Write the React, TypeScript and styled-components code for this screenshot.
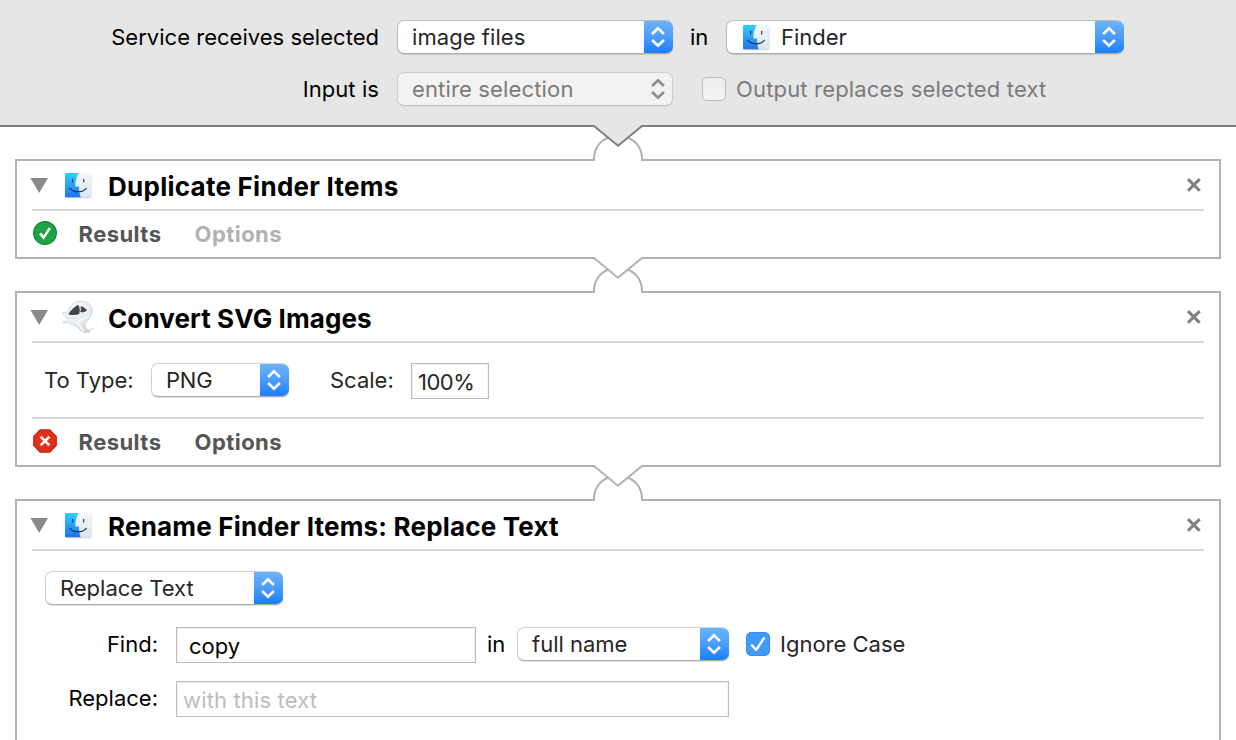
import React from "react";
import styled, { createGlobalStyle, css } from "styled-components";

const GlobalStyle = createGlobalStyle`
  *, *::before, *::after { box-sizing: border-box; }
  body { margin: 0; background: #fff; }
  svg { display: block; flex: none; }
`;

const Page = styled.div`
  display: flex;
  flex-direction: column;
  height: 740px;
  overflow: hidden;
  background: #fff;
  color: #000;
  font-family: Inter, "Liberation Sans", sans-serif;
  font-size: 22px;
  line-height: 28px;
`;

const ServiceBar = styled.header`
  flex: none;
  display: flex;
  flex-direction: column;
  gap: 18px;
  height: 127px;
  padding-top: 20px;
  background: #e6e6e6;
  border-bottom: 2px solid #7f7f7f;
`;

const ServiceRow = styled.div`
  display: flex;
  align-items: center;
  height: 34px;
`;

const Text = styled.span<{ $spacing?: number; $muted?: boolean; $soft?: boolean }>`
  flex: none;
  white-space: pre;
  letter-spacing: ${(p) => p.$spacing ?? 0}px;
  color: ${(p) => (p.$muted ? "#7b7b7b" : p.$soft ? "#262626" : "#000")};
`;

const ServiceLabel = styled(Text)`
  width: 379px;
  margin-right: 18px;
  text-align: right;
`;

const Between = styled(Text)`
  margin-left: 17px;
  width: 36px;
`;

const SelectBox = styled.div<{ $width: number; $disabled?: boolean; $onGray?: boolean }>`
  flex: none;
  display: flex;
  align-items: stretch;
  width: ${(p) => p.$width}px;
  height: 34px;
  border-radius: 7px;
  overflow: hidden;
  background: #fff;
  border: 1px solid ${(p) => (p.$onGray ? "#bdbdbd" : "#d2d2d2")};
  border-bottom-color: #aaa;
  border-right: 0;
  box-shadow: 0 1px 1px rgba(0, 0, 0, 0.12);
  ${(p) =>
    p.$disabled &&
    css`
      background: #f2f2f2;
      border: 1px solid #cecece;
      border-bottom-color: #c0c0c0;
      box-shadow: 0 1px 1px rgba(0, 0, 0, 0.05);
    `}
`;

const SelectValue = styled.div<{ $indent: number }>`
  flex: 1;
  display: flex;
  align-items: center;
  gap: 10px;
  padding-left: ${(p) => p.$indent}px;
`;

const SelectButton = styled.div<{ $disabled?: boolean }>`
  width: 29px;
  margin: -1px 0;
  padding-right: 1px;
  display: flex;
  align-items: center;
  justify-content: center;
  color: #fff;
  background: linear-gradient(#6eb4f9, #4a9df9 50%, #177cfe);
  box-shadow: inset 0 1px 0 #5aa3ef, inset 0 -1px 0 #0f68ec;
  ${(p) =>
    p.$disabled &&
    css`
      width: 28px;
      padding-right: 0;
      color: #8c8c8c;
      background: none;
      box-shadow: none;
    `}
`;

const CheckboxBox = styled.div<{ $checked?: boolean; $left: number; $gap: number }>`
  flex: none;
  display: flex;
  align-items: center;
  justify-content: center;
  width: 24px;
  height: 24px;
  margin-left: ${(p) => p.$left}px;
  margin-right: ${(p) => p.$gap}px;
  border-radius: 5px;
  background: linear-gradient(#ededed, #f3f3f3);
  border: 1px solid #bcbcbc;
  ${(p) =>
    p.$checked &&
    css`
      background: #409af8;
      border-color: #3a90f0;
    `}
`;

const Connector = styled.div`
  flex: none;
  display: flex;
  justify-content: center;
  height: 32px;
  svg {
    position: relative;
    z-index: 1;
    margin-top: -2px;
  }
`;

const Card = styled.section<{ $open?: boolean }>`
  flex: none;
  margin: 0 15px;
  border: 2px solid #b2b2b2;
  background: #fff;
  ${(p) =>
    p.$open &&
    css`
      flex: 1;
      border-bottom: 0;
    `}
`;

const CardHeader = styled.div`
  display: flex;
  align-items: center;
  height: 50px;
  margin: 0 15px;
  border-bottom: 2px solid #d8d8d8;
`;

const ActionIcon = styled.div`
  display: flex;
  justify-content: center;
  width: 34px;
  margin: 0 13px 0 10px;
`;

const Title = styled.h2<{ $spacing: number }>`
  flex: 1;
  margin: 0;
  padding-top: 3px;
  font-size: 26px;
  font-weight: 700;
  line-height: 32px;
  white-space: pre;
  letter-spacing: ${(p) => p.$spacing}px;
`;

const CardFooter = styled.div<{ $ruled?: boolean }>`
  display: flex;
  align-items: center;
  height: ${(p) => (p.$ruled ? 48 : 46)}px;
  margin: 0 15px;
  border-top: ${(p) => (p.$ruled ? "2px solid #d8d8d8" : "0")};
  svg {
    margin: 0 21.5px 2px 1px;
  }
`;

const FooterTab = styled.span<{ $dim?: boolean; $width?: number }>`
  width: ${(p) => (p.$width ? `${p.$width}px` : "auto")};
  font-weight: 700;
  letter-spacing: 0.45px;
  color: ${(p) => (p.$dim ? "#b1b1b1" : "#555")};
`;

const ConvertBody = styled.div`
  display: flex;
  align-items: flex-start;
  height: 74px;
  padding: 20px 0 0 27px;
`;

const RowLabel = styled(Text)<{ $width: number; $left?: number }>`
  width: ${(p) => p.$width}px;
  height: 34px;
  margin-left: ${(p) => p.$left ?? 0}px;
  line-height: 34px;
`;

const Field = styled.div<{ $width: number; $indent: number; $placeholder?: boolean; $spacing?: number }>`
  flex: none;
  width: ${(p) => p.$width}px;
  height: 36px;
  padding: 1px 0 0 ${(p) => p.$indent}px;
  line-height: 34px;
  white-space: pre;
  border: 1px solid #bcbcbc;
  box-shadow: inset 0 1px 0 #ececec, inset 1px 0 0 #f3f3f3, inset -1px 0 0 #f3f3f3;
  letter-spacing: ${(p) => p.$spacing ?? 0}px;
  color: ${(p) => (p.$placeholder ? "#bcbcbc" : "inherit")};
`;

const ScaleField = styled(Field)`
  color: #262626;
`;

const RenameBody = styled.div`
  display: flex;
  flex-direction: column;
  padding: 20px 0 0 28px;
`;

const FormRow = styled.div<{ $top: number }>`
  display: flex;
  height: 36px;
  margin-top: ${(p) => p.$top}px;
`;

const FormLabel = styled(RowLabel)`
  margin-right: 18px;
  text-align: right;
`;

const CheckRow = styled.div`
  display: flex;
  align-items: center;
  height: 34px;
`;

const FinderIcon = () => (
  <svg width="29" height="27" viewBox="-1 -1 29 27">
    <defs>
      <linearGradient id="faceLeft" x1="0" y1="0" x2="0" y2="1">
        <stop offset="0" stopColor="#2fd0fb" />
        <stop offset="1" stopColor="#1f71ee" />
      </linearGradient>
      <linearGradient id="faceRight" x1="0" y1="0" x2="0" y2="1">
        <stop offset="0" stopColor="#f6f7f9" />
        <stop offset="1" stopColor="#dbe7f3" />
      </linearGradient>
    </defs>
    <rect x="0" y="0.8" width="26.6" height="24.4" rx="1.6" fill="#000" opacity="0.16" />
    <rect x="0" y="0" width="26.3" height="24.3" rx="1.4" fill="url(#faceRight)" />
    <path d="M1.4 0H13.7C11.6 4 10.7 8 10.6 13.3H14.3C14.2 17.3 14.8 21 16 24.3H1.4Q0 24.3 0 22.9V1.4Q0 0 1.4 0Z" fill="url(#faceLeft)" />
    <path d="M13.7 0.4C11.6 4 10.7 8 10.6 13.3H14.3C14.2 17.3 14.8 21 15.8 24" fill="none" stroke="#fff" strokeWidth="0.6" opacity="0.7" />
    <path d="M7.6 6.4V8.9M18.7 6.4V8.9" stroke="#17304d" strokeWidth="1.1" strokeLinecap="round" />
    <path d="M4.8 15.3C9 19.9 17.4 20 21.3 15.3" fill="none" stroke="#14304f" strokeWidth="1.1" strokeLinecap="round" />
  </svg>
);

const GhostIcon = () => (
  <svg width="34" height="34" viewBox="-1 -1 34 34">
    <defs>
      <linearGradient id="ghostBody" x1="0.2" y1="0" x2="0.9" y2="1">
        <stop offset="0" stopColor="#f8f8f8" />
        <stop offset="0.55" stopColor="#e9edf0" />
        <stop offset="1" stopColor="#c8d1d9" />
      </linearGradient>
    </defs>
    <path
      d="M8.2 5.6C11.2 1.8 15.4 0 20 0.3C26 0.5 30 4 30.2 9.6C30.4 14.6 27.4 17.4 25 20C22.6 22.8 22.4 26.2 24.8 28C26 29 27.6 28.7 28.4 30.2C27.4 31.5 24.2 32 21.2 31C17.4 29.6 16.6 25.6 12.8 24.4C10.6 23.7 8.6 24.6 7.2 22.2C5.6 21 3.2 22.4 1 21.2C2.6 20.6 4.6 20.2 4.8 18.2C5 16.4 4 15 2.4 14.1C.7 13 .2 11.7 1.2 11.2C2.4 10.7 3.8 12.1 5.2 11.6C6.6 10.5 6.7 7.8 8.2 5.6Z"
      fill="url(#ghostBody)"
      stroke="#c3c9ce"
      strokeWidth="0.7"
    />
    <path d="M26.8 14C23 19 17.4 18 15.8 22.4C19 24.6 18.8 28.8 22.2 30" fill="none" stroke="#fff" strokeWidth="2.4" opacity="0.6" />
    <path d="M6.2 13.2C8.6 9.8 12 6.2 16 3.8C18 6.4 18.2 10 17.2 13C14 14.4 9.8 14.4 6.2 13.2Z" fill="#454545" />
    <path d="M18.3 5.4C21 5.2 23.8 7 25 9.4C23.2 11 20.6 11.6 18.2 11C19.2 9 19.1 7 18.3 5.4Z" fill="#454545" />
    <path d="M6.6 16C8.6 17.8 11.4 18.2 13.6 16.8" fill="none" stroke="#ced4da" strokeWidth="0.9" />
    <path d="M28.6 27.4Q30.4 26.2 31 27.8Q31 29.2 29.4 29" fill="none" stroke="#cdd3d9" strokeWidth="0.9" />
  </svg>
);

const Chevrons = () => (
  <svg width="16" height="24" viewBox="0 0 16 24">
    <path d="M2.1 9L8 3.3L13.9 9M2.1 15L8 20.7L13.9 15" fill="none" stroke="currentColor" strokeWidth="2.6" />
  </svg>
);

const Disclosure = () => (
  <svg width="19" height="18" viewBox="0 0 19 18">
    <path d="M-1.6 2H16L7.2 17Z" fill="#8a8a8a" />
  </svg>
);

const DisclosureSlot = styled.div`
  svg {
    overflow: visible;
  }
`;

const CloseIcon = () => (
  <svg width="20" height="16" viewBox="0 0 20 16">
    <path d="M4 2.1L15.7 13.8M15.7 2.1L4 13.8" stroke="#7f7f7f" strokeWidth="3" />
  </svg>
);

const SuccessIcon = () => (
  <svg width="24" height="24" viewBox="0 0 24 24">
    <circle cx="12" cy="12" r="11.4" fill="#1ba345" stroke="#158237" strokeWidth="1.1" />
    <path d="M7.1 12.4L10.6 16.6L16.9 7" fill="none" stroke="#fff" strokeWidth="2.5" />
  </svg>
);

const FailureIcon = () => (
  <svg width="24" height="24" viewBox="0 0 24 24">
    <path d="M7.3 0.7H16.7L23.3 7.3V16.7L16.7 23.3H7.3L0.7 16.7V7.3Z" fill="#e1301a" stroke="#b92713" strokeWidth="1.1" strokeLinejoin="round" />
    <path d="M7.6 7.6L16.4 16.4M16.4 7.6L7.6 16.4" stroke="#fff" strokeWidth="2.7" />
  </svg>
);

const CheckMark = () => (
  <svg width="22" height="22" viewBox="0 0 22 22">
    <path d="M5 12.2L9.1 17L17 5.2" fill="none" stroke="#fff" strokeWidth="2.3" strokeLinecap="round" strokeLinejoin="round" />
  </svg>
);

function Link({ fill, stroke }: { fill: string; stroke: string }) {
  return (
    <Connector>
      <svg width="50" height="36" viewBox="0 0 50 36">
        <path d="M2 34H48V36H2Z" fill="#fff" />
        <path d="M1 36V34C1 23.5 7 15.5 16 12.2M49 36V34C49 23.5 43 15.5 34 12.2" fill="none" stroke="#b2b2b2" strokeWidth="2" />
        <path d="M0.8 0H49.2L25 20.5Z" fill={fill} />
        <path d="M0 1H1L25 20.8L49 1H50" fill="none" stroke={stroke} strokeWidth="2" />
      </svg>
    </Connector>
  );
}

interface SelectProps {
  width: number;
  value: string;
  spacing?: number;
  indent?: number;
  icon?: React.ReactNode;
  disabled?: boolean;
  onGray?: boolean;
}

function Select({ width, value, spacing, indent = 14, icon, disabled, onGray }: SelectProps) {
  return (
    <SelectBox $width={width} $disabled={disabled} $onGray={onGray}>
      <SelectValue $indent={indent}>
        {icon}
        <Text $spacing={spacing} $muted={disabled} $soft>{value}</Text>
      </SelectValue>
      <SelectButton $disabled={disabled}>
        <Chevrons />
      </SelectButton>
    </SelectBox>
  );
}

function Header({ title, spacing, icon }: { title: string; spacing: number; icon: React.ReactNode }) {
  return (
    <CardHeader>
      <DisclosureSlot>
        <Disclosure />
      </DisclosureSlot>
      <ActionIcon>{icon}</ActionIcon>
      <Title $spacing={spacing}>{title}</Title>
      <CloseIcon />
    </CardHeader>
  );
}

export default function App() {
  return (
    <Page>
      <GlobalStyle />
      <ServiceBar>
        <ServiceRow>
          <ServiceLabel $spacing={0.02}>Service receives selected</ServiceLabel>
          <Select width={276} value="image files" spacing={0.06} onGray />
          <Between>in</Between>
          <Select width={398} value="Finder" indent={15} icon={<FinderIcon />} onGray />
        </ServiceRow>
        <ServiceRow>
          <ServiceLabel $spacing={0.08}>Input is</ServiceLabel>
          <Select width={276} value="entire selection" spacing={0.15} disabled />
          <CheckboxBox $left={29} $gap={10} />
          <Text $spacing={0.17} $muted>Output replaces selected text</Text>
        </ServiceRow>
      </ServiceBar>

      <Link fill="#e6e6e6" stroke="#7f7f7f" />

      <Card>
        <Header title="Duplicate Finder Items" spacing={0.26} icon={<FinderIcon />} />
        <CardFooter>
          <SuccessIcon />
          <FooterTab $width={116}>Results</FooterTab>
          <FooterTab $dim>Options</FooterTab>
        </CardFooter>
      </Card>

      <Link fill="#fff" stroke="#b2b2b2" />

      <Card>
        <Header title="Convert SVG Images" spacing={0.1} icon={<GhostIcon />} />
        <ConvertBody>
          <RowLabel $width={107} $soft>To Type:</RowLabel>
          <Select width={138} value="PNG" spacing={-0.2} />
          <RowLabel $left={41} $width={81} $soft>Scale:</RowLabel>
          <ScaleField $width={78} $indent={6} $spacing={-0.5}>100%</ScaleField>
        </ConvertBody>
        <CardFooter $ruled>
          <FailureIcon />
          <FooterTab $width={116}>Results</FooterTab>
          <FooterTab>Options</FooterTab>
        </CardFooter>
      </Card>

      <Link fill="#fff" stroke="#b2b2b2" />

      <Card $open>
        <Header title="Rename Finder Items: Replace Text" spacing={0.19} icon={<FinderIcon />} />
        <RenameBody>
          <Select width={238} value="Replace Text" spacing={-0.02} />
          <FormRow $top={22}>
            <FormLabel $width={113}>Find:</FormLabel>
            <Field $width={300} $indent={12}>copy</Field>
            <RowLabel $left={11} $width={30}>in</RowLabel>
            <Select width={212} value="full name" />
            <CheckRow>
              <CheckboxBox $left={17} $gap={10} $checked>
                <CheckMark />
              </CheckboxBox>
              <Text $soft>Ignore Case</Text>
            </CheckRow>
          </FormRow>
          <FormRow $top={18}>
            <FormLabel $width={113}>Replace:</FormLabel>
            <Field $width={553} $indent={6} $placeholder $spacing={0.15}>with this text</Field>
          </FormRow>
        </RenameBody>
      </Card>
    </Page>
  );
}
